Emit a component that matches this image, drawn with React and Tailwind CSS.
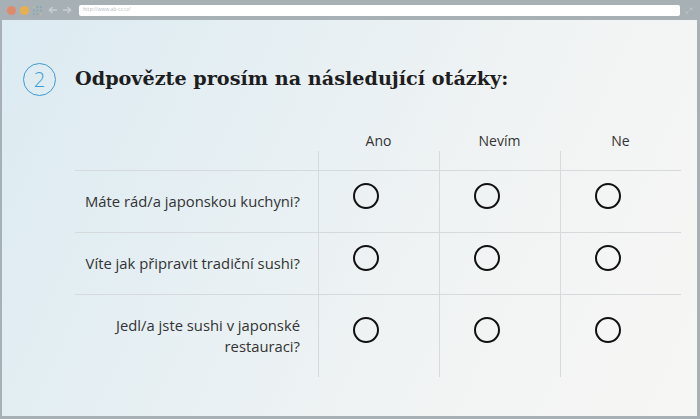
import { useState } from "react";

const questions = [
  { id: "q1", text: "Máte rád/a japonskou kuchyni?" },
  { id: "q2", text: "Víte jak připravit tradiční sushi?" },
  { id: "q3", text: ["Jedl/a jste sushi v japonské", "restauraci?"] },
];

const answers = ["Ano", "Nevím", "Ne"];

export default function App() {
  const [picked, setPicked] = useState({});

  return (
    <div className="flex h-[419px] w-[700px] flex-col bg-[#a7b0b5] font-['Open_Sans',sans-serif]">
      <BrowserBar />
      <div className="mb-[3px] ml-[2px] mr-[3px] flex-1 bg-[linear-gradient(115deg,#dcebf2_0%,#e8f0f3_40%,#f2f4f4_70%,#f6f6f4_100%)] pl-[21px] pt-[43px]">
        <div className="flex items-center gap-[19px]">
          <div className="flex h-[33px] w-[33px] items-center justify-center rounded-full border border-[#3d9bd3] text-[20px] font-light leading-none text-[#3d9bd3]">
            2
          </div>
          <h1 className="font-['DejaVu_Serif',serif] text-[19.2px] font-bold text-[#1e1e1e]">
            Odpovězte prosím na následující otázky:
          </h1>
        </div>

        <div className="ml-[52px] mt-[34px] w-[606px] text-[#333]">
          <div className="grid grid-cols-[243px_121px_121px_121px] text-[14px]">
            <div />
            {answers.map((label) => (
              <div key={label} className="flex flex-col">
                <div className="h-[21px] text-center leading-[21px]">{label}</div>
                <div className="h-[19px] border-l border-[#d6dadc]" />
              </div>
            ))}
          </div>

          {questions.map((q) => (
            <div key={q.id} className="grid grid-cols-[243px_121px_121px_121px] border-t border-[#d6dadc]">
              <div className="py-[20px] pr-[18px] text-right text-[14.8px] leading-[21px]">
                {Array.isArray(q.text) ? q.text.map((line) => <div key={line}>{line}</div>) : q.text}
              </div>
              {answers.map((label) => (
                <div key={label} className="flex items-center justify-center border-l border-[#d6dadc] pr-[27px]">
                  <button
                    type="button"
                    onClick={() => setPicked({ ...picked, [q.id]: label })}
                    className="mb-[12px] flex h-[26px] w-[26px] items-center justify-center rounded-full border-2 border-[#111]"
                  >
                    {picked[q.id] === label && <span className="h-[12px] w-[12px] rounded-full bg-[#111]" />}
                  </button>
                </div>
              ))}
            </div>
          ))}
        </div>
      </div>
    </div>
  );
}

function BrowserBar() {
  return (
    <div className="flex h-[20px] items-center pl-[7px] pr-[8px]">
      <span className="h-[9px] w-[9px] rounded-full bg-[#e08a6a]" />
      <span className="ml-[4px] h-[9px] w-[9px] rounded-full bg-[#e8b04c]" />
      <svg className="ml-[4px]" width="9" height="9" viewBox="0 0 9 9">
        {[1, 4.5, 8].map((x) =>
          [1, 4.5, 8].map((y) => (
            <circle key={`${x}-${y}`} cx={x} cy={y} r="0.9" fill={(x + y) % 2 ? "#7fa8b8" : "#c9b98a"} />
          )),
        )}
      </svg>
      <svg className="ml-[6px]" width="10" height="8" viewBox="0 0 10 8">
        <path d="M9 4H2M4.5 1L1.5 4l3 3" stroke="#c8ced1" strokeWidth="1.6" fill="none" />
      </svg>
      <svg className="ml-[4px]" width="10" height="8" viewBox="0 0 10 8">
        <path d="M1 4h7M5.5 1l3 3-3 3" stroke="#c8ced1" strokeWidth="1.6" fill="none" />
      </svg>
      <div className="ml-[7px] flex h-[11px] flex-1 items-center rounded-[2px] bg-white pl-[4px] text-[5px] text-[#b8bec2]">
        http://www.ab-cz.cz/
      </div>
      <span className="ml-[6px] text-[8px] leading-none text-[#c2c9cc]">⤢</span>
    </div>
  );
}
